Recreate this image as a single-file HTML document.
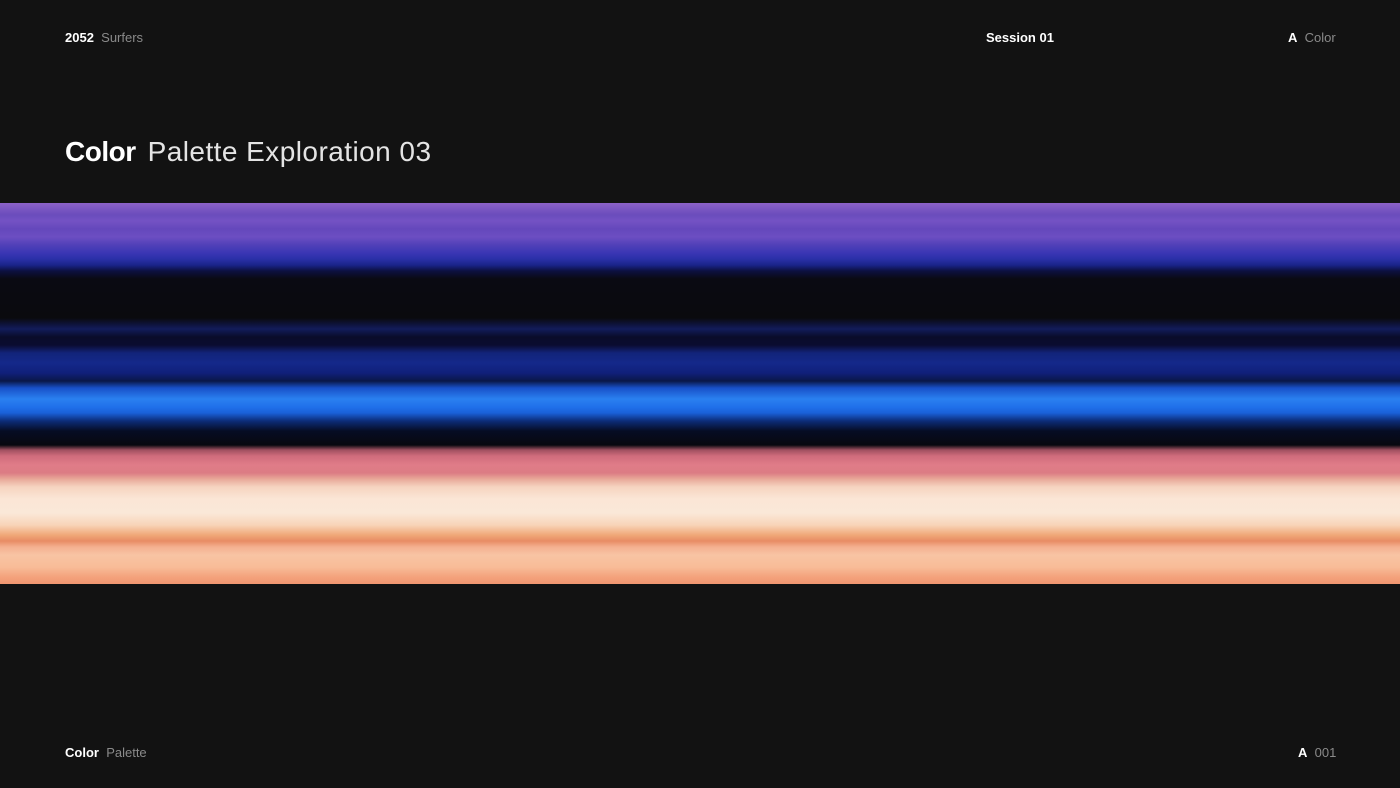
<!DOCTYPE html>
<html><head><meta charset="utf-8"><style>
html,body{margin:0;padding:0;}
body{width:1400px;height:788px;background:#121212;position:relative;overflow:hidden;font-family:"Liberation Sans",Arial,sans-serif;color:#fff;}
.t{position:absolute;font-size:13px;line-height:16px;white-space:nowrap;}
.b{font-weight:bold;color:#fff;}
.l{color:#8a8a8a;}
.title{position:absolute;left:65px;top:135px;font-size:28px;line-height:34px;white-space:nowrap;}
.title .b{letter-spacing:-0.5px;}
.title .l{color:#e4e4e4;font-weight:normal;letter-spacing:0.45px;margin-left:12px;display:inline-block;}
.band{position:absolute;left:0;top:203px;width:1400px;height:381px;
background:linear-gradient(to bottom,
#8c62c8 0px,#7a56c2 6px,#6a4cbc 12px,#7452c4 18px,#6448bc 26px,#6c4ec2 34px,#5040b8 42px,#3a36b4 50px,#2a30a8 56px,#1a248a 62px,#0c1040 68px,#0a0a12 76px,
#0a0a0e 115px,#0e1440 122px,#121c5a 126px,#0a0c2a 134px,#0a0c30 142px,#12247a 150px,#14288a 160px,#10207a 170px,#0a1848 178px,
#1850c8 185px,#2a80f0 196px,#2070ea 204px,#1a60d8 210px,#0c2c78 218px,#060c24 228px,#08080f 242px,
#a05060 247px,#d06c7c 253px,#e07c88 262px,#dc7c84 270px,#e8a898 276px,#f6d4c0 284px,#fbe6d6 296px,#fae8d8 310px,#f8d4b8 322px,#f0a878 332px,#e88c64 338px,#f4b090 344px,#f8c4a4 352px,#f8bc98 364px,#f4a27c 374px,#f09670 381px);}
</style></head><body>
<div class="t" style="left:65px;top:30px"><span class="b">2052</span>&nbsp; <span class="l">Surfers</span></div>
<div class="t" style="left:986px;top:30px"><span class="b">Session 01</span></div>
<div class="t" style="left:1288px;top:30px"><span class="b">A</span>&nbsp; <span class="l">Color</span></div>
<div class="title"><span class="b">Color</span><span class="l">Palette Exploration 03</span></div>
<div class="band"></div>
<div class="t" style="left:65px;top:745px"><span class="b">Color</span>&nbsp; <span class="l">Palette</span></div>
<div class="t" style="left:1298px;top:745px"><span class="b">A</span>&nbsp; <span class="l">001</span></div>
</body></html>
